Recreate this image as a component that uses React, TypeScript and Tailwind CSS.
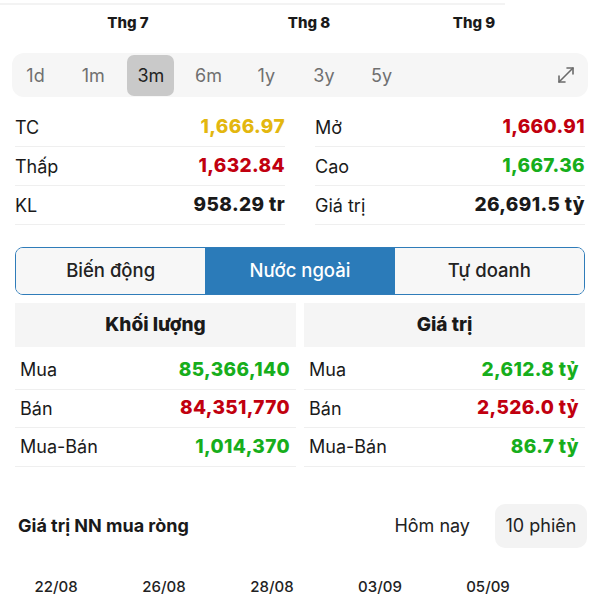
import { MoveDiagonal } from "lucide-react";

const periods = ["1d", "1m", "3m", "6m", "1y", "3y", "5y"];

const stats = [
  [
    { label: "TC", value: "1,666.97", color: "text-[#e3b70f]" },
    { label: "Thấp", value: "1,632.84", color: "text-[#c1000f]" },
    { label: "KL", value: "958.29 tr", color: "text-[#1a1a1a]" },
  ],
  [
    { label: "Mở", value: "1,660.91", color: "text-[#c1000f]" },
    { label: "Cao", value: "1,667.36", color: "text-[#17ae1c]" },
    { label: "Giá trị", value: "26,691.5 tỷ", color: "text-[#1a1a1a]" },
  ],
];

const foreign = [
  {
    title: "Khối lượng",
    rows: [
      { label: "Mua", value: "85,366,140", color: "text-[#17ae1c]" },
      { label: "Bán", value: "84,351,770", color: "text-[#c1000f]" },
      { label: "Mua-Bán", value: "1,014,370", color: "text-[#17ae1c]" },
    ],
  },
  {
    title: "Giá trị",
    rows: [
      { label: "Mua", value: "2,612.8 tỷ", color: "text-[#17ae1c]" },
      { label: "Bán", value: "2,526.0 tỷ", color: "text-[#c1000f]" },
      { label: "Mua-Bán", value: "86.7 tỷ", color: "text-[#17ae1c]" },
    ],
  },
];

const dates = ["22/08", "26/08", "28/08", "03/09", "05/09"];

export default function App() {
  return (
    <div className="w-[600px] h-[600px] overflow-hidden bg-white text-[#1a1a1a] font-['Inter','Liberation_Sans',sans-serif]">
      <div className="h-[2px] w-[505px] mt-[3px] bg-[#f3f3f3]" />

      {/* month axis */}
      <div className="flex h-[36px] items-center text-[15px] font-extrabold">
        <div className="ml-[88px] w-[80px] text-center">Thg 7</div>
        <div className="ml-[101px] w-[80px] text-center">Thg 8</div>
        <div className="ml-[85px] w-[80px] text-center">Thg 9</div>
      </div>

      {/* period selector */}
      <div className="mx-[12px] mt-[12px] h-[44px] rounded-[12px] bg-[#f6f6f6] flex items-center">
        <div className="flex gap-[10.7px]">
          {periods.map((p) => (
            <div
              key={p}
              className={
                p === "3m"
                  ? "w-[47px] h-[41px] rounded-[7px] bg-[#c9c9c9] flex items-center justify-center text-[18px] text-[#222]"
                  : "w-[47px] h-[41px] flex items-center justify-center text-[18px] text-[#707070]"
              }
            >
              {p}
            </div>
          ))}
        </div>
        <MoveDiagonal className="ml-auto mr-[10px] text-[#6b6b6b]" size={24} strokeWidth={1.6} />
      </div>

      {/* stats */}
      <div className="mx-[15px] mt-[11px] grid grid-cols-2 gap-x-[30px]">
        {stats.map((col, i) => (
          <div key={i}>
            {col.map((r) => (
              <div key={r.label} className="h-[39px] flex items-center justify-between border-b border-[#efefef] text-[18px]">
                <span>{r.label}</span>
                <span className={"text-[19px] font-extrabold tracking-[0.02em] " + r.color}>{r.value}</span>
              </div>
            ))}
          </div>
        ))}
      </div>

      {/* tabs */}
      <div className="mx-[15px] mt-[22px] h-[48px] flex rounded-[8px] border-[1.5px] border-[#2f7cb9] overflow-hidden text-[18.5px]">
        <div className="flex-1 flex items-center justify-center bg-[#f7f7f7] font-medium text-[#222]">Biến động</div>
        <div className="flex-1 flex items-center justify-center bg-[#2b7bb9] font-medium text-white">Nước ngoài</div>
        <div className="flex-1 flex items-center justify-center bg-[#f7f7f7] font-medium text-[#222]">Tự doanh</div>
      </div>

      {/* foreign trade */}
      <div className="mx-[15px] mt-[8px] grid grid-cols-2 gap-x-[8px]">
        {foreign.map((c) => (
          <div key={c.title}>
            <div className="h-[44px] bg-[#f5f5f5] flex items-center justify-center text-[19px] font-extrabold">
              {c.title}
            </div>
            <div className="mt-[4px]">
              {c.rows.map((r) => (
                <div key={r.label} className="h-[38.5px] pl-[5px] pr-[6px] flex items-center justify-between border-b border-[#efefef] text-[18px]">
                  <span>{r.label}</span>
                  <span className={"text-[19px] font-extrabold tracking-[0.02em] " + r.color}>{r.value}</span>
                </div>
              ))}
            </div>
          </div>
        ))}
      </div>

      {/* net buy */}
      <div className="mt-[37px] ml-[18px] mr-[13px] flex items-center h-[44px]">
        <div className="text-[18px] font-bold">Giá trị NN mua ròng</div>
        <div className="ml-auto mr-[25px] text-[18px] text-[#222]">Hôm nay</div>
        <div className="h-[44px] w-[92px] rounded-[10px] bg-[#f3f3f3] flex items-center justify-center text-[18px] text-[#222]">
          10 phiên
        </div>
      </div>

      <div className="mt-[28px] flex text-[15px] font-medium text-[#222]">
        {dates.map((d, i) => (
          <div key={d} className={(i === 0 ? "ml-[30px] " : "ml-[56px] ") + "w-[52px] text-center"}>
            {d}
          </div>
        ))}
      </div>
    </div>
  );
}
